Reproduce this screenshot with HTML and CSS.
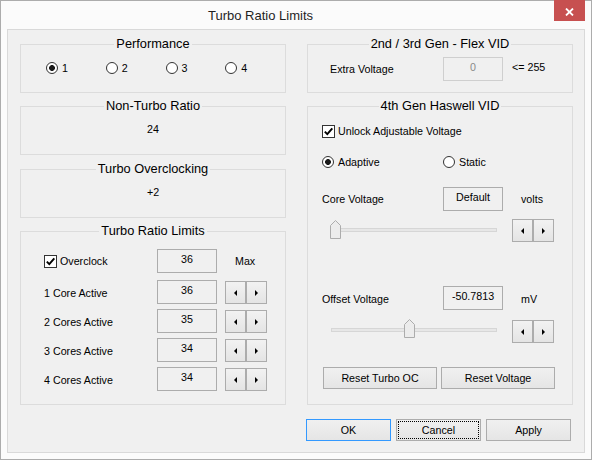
FILE: index.html
```
<!DOCTYPE html>
<html>
<head>
<meta charset="utf-8">
<link rel="stylesheet" href="styles.css">
</head>
<body>
<div class="window">
  <div class="titlebar">
    <div class="title">Turbo Ratio Limits</div>
    <div class="close"><svg width="9" height="8" viewBox="0 0 9 8"><path d="M1 0.5L8 7.5M8 0.5L1 7.5" stroke="#fff" stroke-width="1.8"/></svg></div>
  </div>
  <div class="panel">
    <div class="columns">
      <div class="col">
        <div class="group h49">
          <div class="gtitle"><span>Performance</span></div>
          <div class="radios">
            <div class="ritem"><span class="radio on"></span>1</div>
            <div class="ritem"><span class="radio"></span>2</div>
            <div class="ritem"><span class="radio"></span>3</div>
            <div class="ritem"><span class="radio"></span>4</div>
          </div>
        </div>
        <div class="group h49 gap13">
          <div class="gtitle"><span>Non-Turbo Ratio</span></div>
          <div class="value">24</div>
        </div>
        <div class="group h49 gap14">
          <div class="gtitle"><span>Turbo Overclocking</span></div>
          <div class="value">+2</div>
        </div>
        <div class="group h174 gap13">
          <div class="gtitle"><span>Turbo Ratio Limits</span></div>
          <div class="trl">
            <div class="row r-first">
              <div class="lbl lbl-check"><span class="check"><svg width="11" height="11" viewBox="0 0 11 11"><path d="M1.8 5.6L4.3 8.2L9.3 2.3" fill="none" stroke="#000" stroke-width="1.9"/></svg></span>Overclock</div>
              <div class="tb">36</div>
              <div class="unit">Max</div>
            </div>
            <div class="row r-second">
              <div class="lbl low">1 Core Active</div>
              <div class="tb">36</div>
              <div class="spin"><span class="sbtn"><i class="arr-l"></i></span><span class="sbtn"><i class="arr-r"></i></span></div>
            </div>
            <div class="row r-next">
              <div class="lbl low">2 Cores Active</div>
              <div class="tb">35</div>
              <div class="spin"><span class="sbtn"><i class="arr-l"></i></span><span class="sbtn"><i class="arr-r"></i></span></div>
            </div>
            <div class="row r-next">
              <div class="lbl low">3 Cores Active</div>
              <div class="tb">34</div>
              <div class="spin"><span class="sbtn"><i class="arr-l"></i></span><span class="sbtn"><i class="arr-r"></i></span></div>
            </div>
            <div class="row r-next">
              <div class="lbl low">4 Cores Active</div>
              <div class="tb">34</div>
              <div class="spin"><span class="sbtn"><i class="arr-l"></i></span><span class="sbtn"><i class="arr-r"></i></span></div>
            </div>
          </div>
        </div>
      </div>
      <div class="col">
        <div class="group h49">
          <div class="gtitle"><span>2nd / 3rd Gen - Flex VID</span></div>
          <div class="row fv">
            <div class="lbl">Extra Voltage</div>
            <div class="tb dis">0</div>
            <div class="note">&lt;= 255</div>
          </div>
        </div>
        <div class="group h299 gap13">
          <div class="gtitle"><span>4th Gen Haswell VID</span></div>
          <div class="hw">
            <div class="chkrow"><span class="check"><svg width="11" height="11" viewBox="0 0 11 11"><path d="M1.8 5.6L4.3 8.2L9.3 2.3" fill="none" stroke="#000" stroke-width="1.9"/></svg></span>Unlock Adjustable Voltage</div>
            <div class="radrow">
              <div class="ritem2"><span class="radio on"></span>Adaptive</div>
              <div class="ritem2"><span class="radio"></span>Static</div>
            </div>
            <div class="row core">
              <div class="lbl wide">Core Voltage</div>
              <div class="tb">Default</div>
              <div class="unit">volts</div>
            </div>
            <div class="srow s1">
              <div class="slider">
                <div class="track"></div>
                <svg class="thumb" style="left:0px" width="11" height="19" viewBox="0 0 11 19"><path d="M0.5 5.5L5.5 0.5L10.5 5.5V18.5H0.5Z" fill="#ececec" stroke="#acacac"/></svg>
              </div>
              <div class="spin"><span class="sbtn"><i class="arr-l"></i></span><span class="sbtn"><i class="arr-r"></i></span></div>
            </div>
            <div class="row offset">
              <div class="lbl wide low">Offset Voltage</div>
              <div class="tb">-50.7813</div>
              <div class="unit low">mV</div>
            </div>
            <div class="srow s2">
              <div class="slider">
                <div class="track"></div>
                <svg class="thumb" style="left:74px" width="11" height="19" viewBox="0 0 11 19"><path d="M0.5 5.5L5.5 0.5L10.5 5.5V18.5H0.5Z" fill="#ececec" stroke="#acacac"/></svg>
              </div>
              <div class="spin"><span class="sbtn"><i class="arr-l"></i></span><span class="sbtn"><i class="arr-r"></i></span></div>
            </div>
            <div class="resets">
              <div class="btn reset">Reset Turbo OC</div>
              <div class="btn reset">Reset Voltage</div>
            </div>
          </div>
        </div>
      </div>
    </div>
    <div class="actions">
      <div class="btn act default">OK</div>
      <div class="btn act focus">Cancel</div>
      <div class="btn act">Apply</div>
    </div>
  </div>
</div>
</body>
</html>
```
FILE: styles.css
```
body {
  margin: 0;
  font-family: "Liberation Sans", Arial, sans-serif;
  font-size: 10.7px;
  color: #000;
}

.window {
  width: 592px;
  height: 460px;
  box-sizing: border-box;
  border: 1px solid #acacac;
  background: #fbfbfb;
  padding: 0 6px 6px;
  display: flex;
  flex-direction: column;
}

.titlebar {
  height: 28px;
  display: flex;
  flex: none;
}

.title {
  width: 507px;
  text-align: center;
  font-size: 13px;
  line-height: 27px;
  padding-top: 1px;
  color: #1f1f1f;
}

.close {
  margin-left: auto;
  margin-top: -1px;
  width: 31px;
  height: 21px;
  box-sizing: border-box;
  padding-top: 2px;
  background: #c75050;
  display: flex;
  align-items: center;
  justify-content: center;
}

.panel {
  flex: 1;
  border: 1px solid #d9d9d9;
  background: #f0f0f0;
  padding: 14px 11px 0 12px;
}

.columns {
  display: flex;
  gap: 21px;
}

.col {
  width: 266px;
  display: flex;
  flex-direction: column;
}

.group {
  border: 1px solid #dcdcdc;
  box-sizing: border-box;
}

.h49 { height: 49px; }
.h174 { height: 174px; }
.h299 { height: 299px; }
.gap13 { margin-top: 13px; }
.gap14 { margin-top: 14px; }

.gtitle {
  display: flex;
  justify-content: center;
  margin-top: -9px;
  height: 16px;
  line-height: 16px;
  font-size: 12.8px;
}

.gtitle span {
  background: #f0f0f0;
  padding: 0 2px;
}

.radios {
  display: flex;
  align-items: center;
  height: 16px;
  margin-top: 8px;
  padding-left: 25px;
}

.ritem {
  width: 60px;
  display: flex;
  align-items: center;
  gap: 4px;
}

.radio {
  width: 12px;
  height: 12px;
  box-sizing: border-box;
  border: 1px solid #333;
  border-radius: 50%;
  background: #fff;
  flex: none;
}

.radio.on {
  background: radial-gradient(circle, #1a1a1a 0 2.6px, #fff 3.2px);
}

.check {
  width: 13px;
  height: 13px;
  box-sizing: border-box;
  border: 1px solid #333;
  background: #fff;
  flex: none;
  display: flex;
}

.value {
  text-align: center;
  margin-top: 8px;
  line-height: 14px;
}

.trl {
  padding-left: 23px;
}

.row {
  display: flex;
  height: 24px;
}

.r-first { margin-top: 10px; }
.r-second { margin-top: 7px; }
.r-next { margin-top: 5px; }

.lbl {
  width: 113px;
  line-height: 24px;
  flex: none;
}

.lbl.wide { width: 121px; }

.low { padding-top: 1px; }

.lbl-check {
  display: flex;
  align-items: center;
  gap: 3px;
}

.tb {
  width: 60px;
  height: 24px;
  box-sizing: border-box;
  border: 1px solid #acacac;
  text-align: center;
  line-height: 18px;
  flex: none;
}

.tb.dis {
  border-color: #cfcfcf;
  color: #8a8a8a;
}

.unit {
  margin-left: 18px;
  line-height: 24px;
}

.note {
  margin-left: 9px;
  line-height: 20px;
}

.spin {
  display: flex;
  flex: none;
}

.row .spin {
  margin-left: 8px;
  margin-top: 1px;
}

.sbtn {
  width: 21px;
  height: 23px;
  box-sizing: border-box;
  border: 1px solid #acacac;
  background: linear-gradient(#f2f2f2, #e4e4e4);
  display: flex;
  align-items: center;
  justify-content: center;
}

.arr-l, .arr-r {
  display: block;
  width: 0;
  height: 0;
  border-style: solid;
}

.arr-l {
  border-width: 3px 3px 3px 0;
  border-color: transparent #000 transparent transparent;
}

.arr-r {
  border-width: 3px 0 3px 3px;
  border-color: transparent transparent transparent #000;
}

.fv {
  margin-top: 5px;
  padding-left: 22px;
}

.hw {
  padding-left: 14px;
}

.chkrow {
  margin-top: 11px;
  height: 13px;
  line-height: 13px;
  display: flex;
  align-items: center;
  gap: 3px;
}

.radrow {
  margin-top: 18px;
  height: 12px;
  display: flex;
  align-items: center;
}

.ritem2 {
  width: 121px;
  display: flex;
  align-items: center;
  gap: 4px;
  line-height: 12px;
}

.core { margin-top: 19px; }
.offset { margin-top: 44px; }

.srow {
  display: flex;
}

.s1 { margin-top: 8px; }
.s2 { margin-top: 9px; }
.s2 .spin { margin-top: 1px; }

.slider {
  position: relative;
  width: 172px;
  height: 23px;
  margin-left: 8px;
  flex: none;
}

.track {
  margin-left: 1px;
  margin-top: 9px;
  width: 166px;
  height: 4px;
  box-sizing: border-box;
  border: 1px solid #d6d6d6;
  background: #e7e7e7;
}

.s2 .track { margin-top: 9px; }

.thumb {
  position: absolute;
  top: 1px;
}

.s2 .thumb { top: 0; }

.slider + .spin {
  margin-left: 10px;
}

.btn {
  height: 22px;
  box-sizing: border-box;
  border: 1px solid #acacac;
  background: linear-gradient(#f0f0f0, #e5e5e5);
  display: flex;
  align-items: center;
  justify-content: center;
}

.resets {
  display: flex;
  gap: 4px;
  margin-top: 24px;
  padding-left: 1px;
}

.reset { width: 114px; }

.actions {
  display: flex;
  justify-content: flex-end;
  gap: 5px;
  margin-top: 14px;
  padding-right: 2px;
}

.act { width: 85px; }

.default { border-color: #3399ff; }

.focus {
  outline: 1px dotted #000;
  outline-offset: -3px;
}
```
